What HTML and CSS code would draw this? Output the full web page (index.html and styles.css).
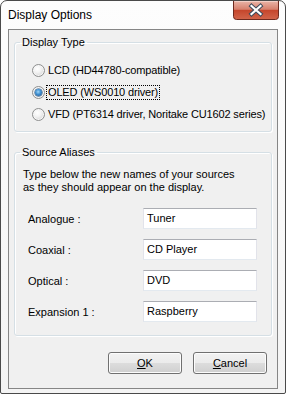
FILE: index.html
```html
<!DOCTYPE html>
<html>
<head>
<meta charset="utf-8">
<link rel="stylesheet" href="styles.css">
</head>
<body>
<div class="window">
  <div class="titlebar">
    <span class="title">Display Options</span>
    <div class="close">
      <svg width="46" height="19" viewBox="0 0 46 19">
        <defs>
          <linearGradient id="cg" x1="0" y1="0" x2="0" y2="1">
            <stop offset="0" stop-color="#eab5a8"/>
            <stop offset="0.45" stop-color="#d7806d"/>
            <stop offset="0.5" stop-color="#c5462c"/>
            <stop offset="1" stop-color="#d2654b"/>
          </linearGradient>
        </defs>
        <path d="M0.5 0 V15.5 Q0.5 18.5 3.5 18.5 H42.5 Q45.5 18.5 45.5 15.5 V0" fill="url(#cg)" stroke="#6e2a1f"/>
        <path d="M1.5 0.5 H44.5" stroke="#f3cfc6" stroke-width="1"/>
        <path d="M18.5 5 L27.5 13 M27.5 5 L18.5 13" stroke="#3e4b5c" stroke-width="4.2" stroke-linecap="square"/>
        <path d="M18.5 5 L27.5 13 M27.5 5 L18.5 13" stroke="#ffffff" stroke-width="2.2" stroke-linecap="square"/>
      </svg>
    </div>
  </div>
  <div class="client">
    <fieldset class="group group-type">
      <legend>Display Type</legend>
      <div class="radios">
        <div class="radio-row"><span class="radio"></span><span class="rlabel">LCD (HD44780-compatible)</span></div>
        <div class="radio-row"><span class="radio checked"></span><span class="rlabel focus">OLED (WS0010 driver)</span></div>
        <div class="radio-row"><span class="radio"></span><span class="rlabel">VFD (PT6314 driver, Noritake CU1602 series)</span></div>
      </div>
    </fieldset>
    <fieldset class="group group-alias">
      <legend>Source Aliases</legend>
      <div class="alias-body">
        <p class="desc">Type below the new names of your sources<br>as they should appear on the display.</p>
        <div class="rows">
          <div class="row"><span class="lbl">Analogue :</span><span class="edit">Tuner</span></div>
          <div class="row"><span class="lbl">Coaxial :</span><span class="edit">CD Player</span></div>
          <div class="row"><span class="lbl">Optical :</span><span class="edit">DVD</span></div>
          <div class="row"><span class="lbl">Expansion 1 :</span><span class="edit">Raspberry</span></div>
        </div>
      </div>
    </fieldset>
    <div class="buttons">
      <div class="btn"><span class="ul">O</span>K</div>
      <div class="btn"><span class="ul">C</span>ancel</div>
    </div>
  </div>
</div>
</body>
</html>
```
FILE: styles.css
```css
* { box-sizing: border-box; }
html, body { margin: 0; padding: 0; background: #ffffff; }
body { width: 286px; height: 394px; overflow: hidden; font-family: "Liberation Sans", Arial, sans-serif; font-size: 11px; color: #000; }

.window {
  width: 286px; height: 394px;
  border: 1px solid #4a4a4a;
  border-radius: 7px 7px 2px 2px;
  background: linear-gradient(#fdfdfd, #f4f4f4);
  display: flex; flex-direction: column;
  overflow: hidden;
}
.titlebar {
  height: 28px; flex: none;
  display: flex; align-items: center;
  padding-left: 7px;
}
.title { font-size: 12px; color: #000; line-height: 14px; }
.close { margin-left: auto; margin-right: 6px; align-self: flex-start; height: 19px; width: 46px; }
.close svg { display: block; }

.client {
  flex: none;
  height: 360px;
  margin: 0 7px;
  border: 1px solid #868686;
  background: #f0f0f0;
  display: flex; flex-direction: column;
}

.group {
  margin: 6px 5px 0 5px;
  border: 1px solid #d5dfe5;
  border-radius: 3px;
  box-shadow: inset 1px 1px 0 #fff, 1px 1px 0 #fff;
  padding: 0;
  min-width: 0;
}
.group legend {
  padding: 0 2px;
  margin-left: 5px;
  line-height: 13px;
}
.radios { padding: 10px 0 6px 17px; }
.radio-row { height: 22px; display: flex; align-items: center; white-space: nowrap; }
.radio {
  width: 13px; height: 13px; border-radius: 50%;
  border: 1px solid #8e8f8f;
  background: radial-gradient(circle at 40% 35%, #ffffff 0, #f4f4f4 35%, #dadada 75%, #cfcfcf 100%);
  box-shadow: inset 0 0 0 1px #f6f6f6;
  flex: none;
  position: relative;
}
.radio.checked::after {
  content: ""; position: absolute; left: 2px; top: 2px; width: 7px; height: 7px; border-radius: 50%;
  background: radial-gradient(circle at 45% 40%, #9fd6f8 0, #3f8fd0 45%, #1c4f86 100%);
  box-shadow: 0 0 0 0.5px #1d4a79;
}
.rlabel { margin-left: 1px; padding: 0 1px; line-height: 13px; border: 1px dotted transparent; letter-spacing: -0.15px; }
.rlabel.focus { border-color: #000; }

.group-alias { margin-top: 14px; }
.alias-body { padding: 9px 0 13px 8px; }
.desc { margin: 0; line-height: 13px; }
.rows { margin-top: 14px; display: flex; flex-direction: column; gap: 10px; }
.row { display: flex; align-items: center; height: 21px; }
.lbl { width: 120px; padding-left: 5px; }
.edit {
  width: 114px; height: 21px;
  background: #fff;
  border: 1px solid #e2e3ea;
  border-top-color: #abadb3;
  border-bottom-color: #e3e9ef;
  padding: 0 3px;
  line-height: 19px;
}

.buttons { margin-top: 16px; display: flex; justify-content: flex-end; gap: 11px; padding-right: 10px; }
.btn {
  width: 74px; height: 22px;
  border: 1px solid #707070;
  border-radius: 3px;
  background: linear-gradient(#f2f2f2 0, #ebebeb 50%, #dddddd 50%, #cfcfcf 100%);
  box-shadow: inset 0 0 0 1px #fcfcfc;
  display: flex; align-items: center; justify-content: center;
  line-height: 13px;
}
.ul { text-decoration: underline; }
```
